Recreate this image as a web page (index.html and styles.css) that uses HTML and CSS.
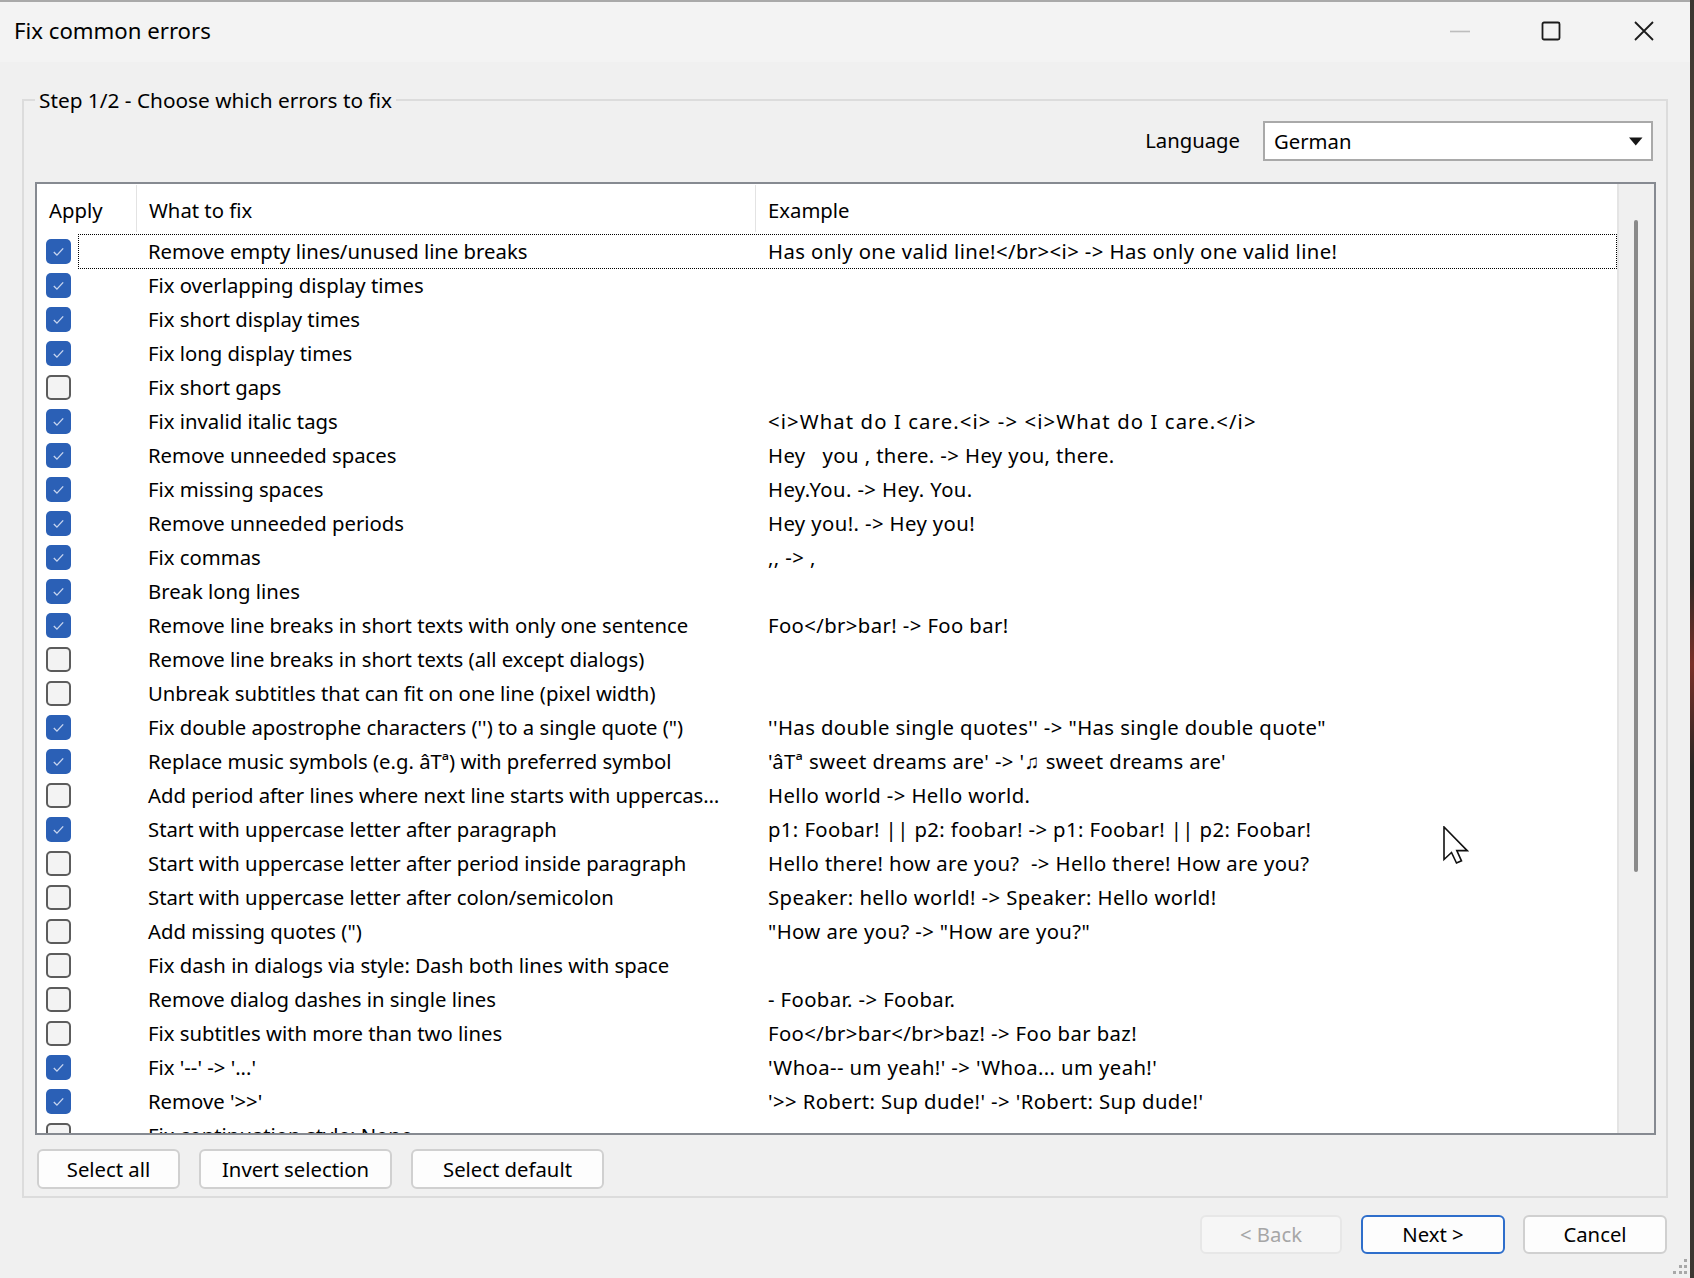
FILE: index.html
```html
<!DOCTYPE html>
<html lang="en">
<head>
<meta charset="utf-8">
<title>Fix common errors</title>
<link rel="stylesheet" href="styles.css">
</head>
<body>
<div class="screen">
  <div class="window">
    <div class="titlebar">
      <span class="title">Fix common errors</span>
      <div class="controls">
        <svg class="ctl ctl-min" width="20" height="20" viewBox="0 0 20 20"><line x1="0" y1="10.5" x2="20" y2="10.5"/></svg>
        <svg class="ctl ctl-max" width="20" height="20" viewBox="0 0 20 20"><rect x="1.5" y="1.5" width="17" height="17" rx="1.5"/></svg>
        <svg class="ctl ctl-close" width="20" height="20" viewBox="0 0 20 20"><path d="M1 1L19 19M19 1L1 19"/></svg>
      </div>
    </div>

    <fieldset class="group">
      <legend>Step 1/2 - Choose which errors to fix</legend>
      <div class="lang-row">
        <span class="lang-label">Language</span>
        <div class="combo">
          <span>German</span>
          <svg class="combo-arrow" width="14" height="9" viewBox="0 0 14 9"><path d="M0 0.5H13.5L6.75 8.5Z"/></svg>
        </div>
      </div>

      <div class="listbox">
        <div class="list-main">
          <div class="list-head">
            <div class="hcell">Apply</div>
            <div class="hcell">What to fix</div>
            <div class="hcell last">Example</div>
          </div>
          <div class="rows">
            <div class="row focused"><span class="c1"><span class="cb on"><svg viewBox="0 0 24 24"><path d="M7.5 12.5l3 3 6-6.5"/></svg></span></span><span class="c2">Remove empty lines/unused line breaks</span><span class="c3">Has only one valid line!&lt;/br&gt;&lt;i&gt; -&gt; Has only one valid line!</span></div>
            <div class="row"><span class="c1"><span class="cb on"><svg viewBox="0 0 24 24"><path d="M7.5 12.5l3 3 6-6.5"/></svg></span></span><span class="c2">Fix overlapping display times</span><span class="c3"></span></div>
            <div class="row"><span class="c1"><span class="cb on"><svg viewBox="0 0 24 24"><path d="M7.5 12.5l3 3 6-6.5"/></svg></span></span><span class="c2">Fix short display times</span><span class="c3"></span></div>
            <div class="row"><span class="c1"><span class="cb on"><svg viewBox="0 0 24 24"><path d="M7.5 12.5l3 3 6-6.5"/></svg></span></span><span class="c2">Fix long display times</span><span class="c3"></span></div>
            <div class="row"><span class="c1"><span class="cb"></span></span><span class="c2">Fix short gaps</span><span class="c3"></span></div>
            <div class="row"><span class="c1"><span class="cb on"><svg viewBox="0 0 24 24"><path d="M7.5 12.5l3 3 6-6.5"/></svg></span></span><span class="c2">Fix invalid italic tags</span><span class="c3 wide">&lt;i&gt;What do I care.&lt;i&gt; -&gt; &lt;i&gt;What do I care.&lt;/i&gt;</span></div>
            <div class="row"><span class="c1"><span class="cb on"><svg viewBox="0 0 24 24"><path d="M7.5 12.5l3 3 6-6.5"/></svg></span></span><span class="c2">Remove unneeded spaces</span><span class="c3">Hey   you , there. -&gt; Hey you, there.</span></div>
            <div class="row"><span class="c1"><span class="cb on"><svg viewBox="0 0 24 24"><path d="M7.5 12.5l3 3 6-6.5"/></svg></span></span><span class="c2">Fix missing spaces</span><span class="c3">Hey.You. -&gt; Hey. You.</span></div>
            <div class="row"><span class="c1"><span class="cb on"><svg viewBox="0 0 24 24"><path d="M7.5 12.5l3 3 6-6.5"/></svg></span></span><span class="c2">Remove unneeded periods</span><span class="c3">Hey you!. -&gt; Hey you!</span></div>
            <div class="row"><span class="c1"><span class="cb on"><svg viewBox="0 0 24 24"><path d="M7.5 12.5l3 3 6-6.5"/></svg></span></span><span class="c2">Fix commas</span><span class="c3">,, -&gt; ,</span></div>
            <div class="row"><span class="c1"><span class="cb on"><svg viewBox="0 0 24 24"><path d="M7.5 12.5l3 3 6-6.5"/></svg></span></span><span class="c2">Break long lines</span><span class="c3"></span></div>
            <div class="row"><span class="c1"><span class="cb on"><svg viewBox="0 0 24 24"><path d="M7.5 12.5l3 3 6-6.5"/></svg></span></span><span class="c2">Remove line breaks in short texts with only one sentence</span><span class="c3">Foo&lt;/br&gt;bar! -&gt; Foo bar!</span></div>
            <div class="row"><span class="c1"><span class="cb"></span></span><span class="c2">Remove line breaks in short texts (all except dialogs)</span><span class="c3"></span></div>
            <div class="row"><span class="c1"><span class="cb"></span></span><span class="c2">Unbreak subtitles that can fit on one line (pixel width)</span><span class="c3"></span></div>
            <div class="row"><span class="c1"><span class="cb on"><svg viewBox="0 0 24 24"><path d="M7.5 12.5l3 3 6-6.5"/></svg></span></span><span class="c2">Fix double apostrophe characters ('') to a single quote (")</span><span class="c3">''Has double single quotes'' -&gt; "Has single double quote"</span></div>
            <div class="row"><span class="c1"><span class="cb on"><svg viewBox="0 0 24 24"><path d="M7.5 12.5l3 3 6-6.5"/></svg></span></span><span class="c2">Replace music symbols (e.g. âTª) with preferred symbol</span><span class="c3">'âTª sweet dreams are' -&gt; '♫ sweet dreams are'</span></div>
            <div class="row"><span class="c1"><span class="cb"></span></span><span class="c2">Add period after lines where next line starts with uppercas…</span><span class="c3">Hello world -&gt; Hello world.</span></div>
            <div class="row"><span class="c1"><span class="cb on"><svg viewBox="0 0 24 24"><path d="M7.5 12.5l3 3 6-6.5"/></svg></span></span><span class="c2">Start with uppercase letter after paragraph</span><span class="c3">p1: Foobar! || p2: foobar! -&gt; p1: Foobar! || p2: Foobar!</span></div>
            <div class="row"><span class="c1"><span class="cb"></span></span><span class="c2">Start with uppercase letter after period inside paragraph</span><span class="c3">Hello there! how are you?  -&gt; Hello there! How are you?</span></div>
            <div class="row"><span class="c1"><span class="cb"></span></span><span class="c2">Start with uppercase letter after colon/semicolon</span><span class="c3">Speaker: hello world! -&gt; Speaker: Hello world!</span></div>
            <div class="row"><span class="c1"><span class="cb"></span></span><span class="c2">Add missing quotes (")</span><span class="c3">"How are you? -&gt; "How are you?"</span></div>
            <div class="row"><span class="c1"><span class="cb"></span></span><span class="c2">Fix dash in dialogs via style: Dash both lines with space</span><span class="c3"></span></div>
            <div class="row"><span class="c1"><span class="cb"></span></span><span class="c2">Remove dialog dashes in single lines</span><span class="c3">- Foobar. -&gt; Foobar.</span></div>
            <div class="row"><span class="c1"><span class="cb"></span></span><span class="c2">Fix subtitles with more than two lines</span><span class="c3">Foo&lt;/br&gt;bar&lt;/br&gt;baz! -&gt; Foo bar baz!</span></div>
            <div class="row"><span class="c1"><span class="cb on"><svg viewBox="0 0 24 24"><path d="M7.5 12.5l3 3 6-6.5"/></svg></span></span><span class="c2">Fix '--' -&gt; '...'</span><span class="c3">'Whoa-- um yeah!' -&gt; 'Whoa... um yeah!'</span></div>
            <div class="row"><span class="c1"><span class="cb on"><svg viewBox="0 0 24 24"><path d="M7.5 12.5l3 3 6-6.5"/></svg></span></span><span class="c2">Remove '&gt;&gt;'</span><span class="c3">'&gt;&gt; Robert: Sup dude!' -&gt; 'Robert: Sup dude!'</span></div>
            <div class="row"><span class="c1"><span class="cb"></span></span><span class="c2">Fix continuation style: None</span><span class="c3"></span></div>
          </div>
        </div>
        <div class="vscroll"><div class="thumb"></div></div>
      </div>

      <div class="btn-row">
        <button class="btn w-sel">Select all</button>
        <button class="btn w-inv">Invert selection</button>
        <button class="btn w-inv">Select default</button>
      </div>
    </fieldset>

    <div class="footer">
      <button class="btn back" disabled>&lt; Back</button>
      <button class="btn next">Next &gt;</button>
      <button class="btn cancel">Cancel</button>
    </div>

    <svg class="cursor" width="26" height="39" viewBox="0 0 26 39"><path d="M1 1V33.5L8.5 26.5L13.5 37L18.5 34.8L13.8 24.6H24.2Z"/></svg>
    <svg class="grip" width="18" height="18" viewBox="0 0 18 18">
      <rect x="14" y="2" width="3" height="3"/>
      <rect x="9" y="8" width="3" height="3"/><rect x="14" y="8" width="3" height="3"/>
      <rect x="3" y="14" width="3" height="3"/><rect x="9" y="14" width="3" height="3"/><rect x="14" y="14" width="3" height="3"/>
    </svg>
  </div>
  <div class="desktop"></div>
</div>
</body>
</html>
```
FILE: styles.css
```css
* { box-sizing: border-box; }
html, body { margin: 0; padding: 0; }
body {
  width: 1694px;
  height: 1278px;
  overflow: hidden;
  background: #f0f0f0;
  font-family: "Noto Sans", "Open Sans", sans-serif;
  font-size: 20.3px;
  color: #000;
}
.screen { display: flex; width: 1694px; height: 1278px; }
.window {
  position: relative;
  width: 1690px;
  height: 1278px;
  background: #f0f0f0;
  border-top: 2px solid #a9a9a9;
}
.desktop {
  width: 4px;
  height: 1278px;
  background: linear-gradient(180deg, #3a3530 0%, #5b4a3c 20%, #2d2925 45%, #7a3028 52%, #2a2724 60%, #3c3732 100%);
}

/* title bar */
.titlebar {
  height: 60px;
  background: #f3f3f3;
  display: flex;
  align-items: center;
  justify-content: space-between;
  padding-left: 14px;
}
.title { font-size: 22.2px; line-height: 1; padding-bottom: 2px; }
.controls { display: flex; align-items: center; margin-right: 36px; margin-bottom: 2px; }
.ctl { display: block; fill: none; }
.ctl-min { stroke: #bdbdbd; stroke-width: 1.6; margin-right: 71px; }
.ctl-max { stroke: #1b1b1b; stroke-width: 1.8; margin-right: 73px; }
.ctl-close { stroke: #1b1b1b; stroke-width: 1.8; }

/* group box */
.group {
  margin: 24px 0 0 22px;
  width: 1646px;
  min-width: 0;
  border: 2px solid #dcdcdc;
  padding: 7px 10px 7px 11px;
}
.group legend {
  padding: 0 4px;
  font-size: 20.8px;
  line-height: 28px;
  margin-top: -1px;
}
.lang-row {
  display: flex;
  justify-content: flex-end;
  align-items: center;
  gap: 23px;
  height: 40px;
}
.lang-label { line-height: 1; padding-bottom: 1px; }
.combo {
  width: 390px;
  height: 40px;
  margin-right: 3px;
  background: #fff;
  border: 2px solid #a9a9a9;
  display: flex;
  align-items: center;
  justify-content: space-between;
  padding: 0 8px 0 9px;
}
.combo-arrow { fill: #161616; display: block; }

/* list view */
.listbox {
  margin-top: 21px;
  height: 953px;
  border: 2px solid #868a91;
  background: #fff;
  display: flex;
}
.list-main { width: 1580px; overflow: hidden; }
.list-head {
  display: grid;
  grid-template-columns: 100px 619px 1fr;
  height: 50px;
}
.hcell {
  height: 47px;
  padding: 8px 0 0 12px;
  line-height: 34px;
  border-right: 1px solid #e3e3e3;
  margin-top: 1px;
}
.hcell.last { border-right: none; }
.rows { height: 899px; overflow: hidden; }
.row {
  position: relative;
  display: grid;
  grid-template-columns: 100px 619px 1fr;
  height: 34px;
  line-height: 34px;
  white-space: pre;
}
.row.focused::after {
  content: "";
  position: absolute;
  left: 41px;
  right: 0;
  top: 0;
  height: 33px;
  border: 1px dotted #000;
}
.c1 { display: flex; align-items: center; padding-left: 9px; }
.c2 { padding-left: 11px; overflow: hidden; }
.c3 { padding-left: 12px; overflow: hidden; letter-spacing: 0.4px; }
.c3.wide { letter-spacing: 1.1px; }
.cb {
  width: 25px;
  height: 25px;
  border-radius: 5px;
  border: 2px solid #5c5c5c;
  background: #f3f3f3;
  display: block;
}
.cb.on {
  border: none;
  background: #2b60b6;
}
.cb svg { width: 25px; height: 25px; display: block; fill: none; stroke: #c8d5ef; stroke-width: 1.3; }

.vscroll {
  width: 37px;
  border-left: 2px solid #e4e4e4;
  background: #f0f0f0;
  padding: 36px 0 0 15px;
}
.thumb { width: 4px; height: 652px; background: #8a8a8a; border-radius: 2px; }

/* buttons */
.btn-row { display: flex; gap: 19px; margin: 14px 0 0 2px; }
.btn {
  font-family: inherit;
  font-size: 20.3px;
  color: #000;
  height: 40px;
  background: #fdfdfd;
  border: 2px solid #d0d0d0;
  border-radius: 6px;
  padding: 0;
  line-height: 1;
}
.w-sel { width: 143px; }
.w-inv { width: 193px; }
.footer { display: flex; justify-content: flex-end; margin: 17px 23px 0 0; }
.footer .btn { height: 39px; width: 144px; }
.footer .back { width: 142px; margin-right: 19px; background: #f6f6f6; border-color: #e7e7e7; color: #a6a6a6; }
.footer .next { margin-right: 18px; border-color: #2e6ecb; }

/* overlays */
.cursor { position: absolute; left: 1443px; top: 824px; fill: #fff; stroke: #111; stroke-width: 1.6; stroke-linejoin: miter; }
.grip { position: absolute; right: 2px; bottom: 3px; fill: #a8a8a8; }
```
